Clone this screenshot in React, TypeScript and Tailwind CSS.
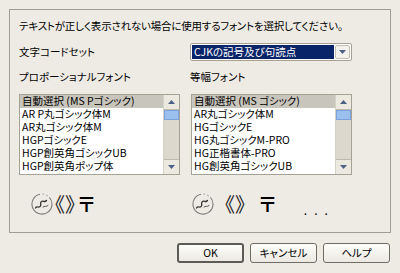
import React from "react";

const jp = "font-['Noto_Sans_CJK_JP','Noto_Sans',sans-serif] [font-feature-settings:'palt']";

const leftFonts = [
  "自動選択 (MS Pゴシック)",
  "AR P丸ゴシック体M",
  "AR丸ゴシック体M",
  "HGPゴシックE",
  "HGP創英角ゴシックUB",
  "HGP創英角ポップ体",
  "HGP行書体",
];

const rightFonts = [
  "自動選択 (MS ゴシック)",
  "AR丸ゴシック体M",
  "HGゴシックE",
  "HG丸ゴシックM-PRO",
  "HG正楷書体-PRO",
  "HG創英角ゴシックUB",
  "HG行書体",
];

const Arrow = ({ up }: { up?: boolean }) => (
  <svg width="7" height="4" viewBox="0 0 7 4">
    {up ? <path d="M0 4 L3.5 0 L7 4 Z" fill="#4d6185" /> : <path d="M0 0 L3.5 4 L7 0 Z" fill="#4d6185" />}
  </svg>
);

const ListBox = ({ items }: { items: string[] }) => (
  <div className="flex h-[81px] w-[161px] overflow-hidden border border-[#a5a195] bg-white">
    <div className="flex-1 overflow-hidden">
      {items.map((item, i) => (
        <div
          key={i}
          className={`flex h-[13px] items-center whitespace-nowrap pl-[2px] text-[10.5px] leading-none ${i === 0 ? "bg-[#c8c5bc]" : ""}`}
        >
          {item}
        </div>
      ))}
    </div>
    <div className="flex w-[16px] flex-col border-l border-[#d6d2c6] bg-[#dcd8cd]">
      <div className="flex h-[15px] items-center justify-center border-b border-[#bdb9ad] bg-[#ece9e1]">
        <Arrow up />
      </div>
      <div className="h-[10px] border border-[#7aa3dd] bg-[#9cc0ee]" />
      <div className="flex-1" />
      <div className="flex h-[15px] items-center justify-center border-t border-[#bdb9ad] bg-[#ece9e1]">
        <Arrow />
      </div>
    </div>
  </div>
);

// circled squiggle mark
const Dingbat = () => (
  <svg width="22" height="22" viewBox="0 0 22 22">
    <path d="M9 1.3 A10 10 0 1 0 18.5 4.5" fill="none" stroke="#7c7c7c" strokeWidth="1.1" />
    <path d="M19.5 6 A10 10 0 0 0 11.5 1" fill="none" stroke="#9a9a9a" strokeWidth="1" strokeDasharray="2 2" />
    <path d="M4.5 15 C6 12 8 16 9.5 13 C10.5 11 8.5 10 10.5 8.5 C12.5 7 13.5 10 15.5 7.5" fill="none" stroke="#333" strokeWidth="1.3" strokeLinecap="round" />
    <path d="M12 14 C13.5 12.5 15 14.5 17 12.5" fill="none" stroke="#555" strokeWidth="1" strokeLinecap="round" />
  </svg>
);

const Button = ({ label, main }: { label: string; main?: boolean }) => (
  <div
    className={`flex h-[20px] w-[67px] items-center justify-center rounded-[3px] bg-gradient-to-b from-[#fdfdfb] to-[#ebe9e1] text-[10.5px] ${
      main ? "border-2 border-[#5c5b55]" : "border border-[#6f6d66]"
    }`}
  >
    {label}
  </div>
);

export default function App() {
  return (
    <div className={`h-[273px] w-[400px] bg-[#eeebe5] pl-[9px] pt-[9px] text-black ${jp}`}>
      <div className="h-[224px] w-[382px] border border-[#a09d92] pl-[9px]">
        <div className="mt-[9px] flex h-[14px] items-center text-[10.5px] tracking-[-0.2px] whitespace-nowrap">
          テキストが正しく表示されない場合に使用するフォントを選択してください。
        </div>
        <div className="mt-[10px] flex h-[18px] items-center">
          <div className="w-[171px] text-[10.5px]">文字コードセット</div>
          <div className="flex h-[18px] w-[162px] items-center rounded-[2px] border border-[#a5a195] bg-white p-[1px]">
            <div className="flex h-full flex-1 items-center bg-[#0a246a] pl-[2px] text-[10.5px] text-white">
              CJKの記号及び句読点
            </div>
            <div className="ml-[1px] flex h-full w-[15px] items-center justify-center rounded-[2px] border border-[#c3bfb3] bg-[#f3f1ec]">
              <Arrow />
            </div>
          </div>
        </div>
        <div className="mt-[9px] flex h-[14px] items-center text-[10.5px]">
          <div className="w-[171px]">プロポーショナルフォント</div>
          <div>等幅フォント</div>
        </div>
        <div className="mt-[10px] flex gap-[11px]">
          <ListBox items={leftFonts} />
          <ListBox items={rightFonts} />
        </div>
        <div className="mt-[18px] flex h-[22px] items-center">
          <div className="flex w-[171px] items-center pl-[12px]">
            <Dingbat />
            <span className="-ml-[8px] text-[20px] leading-none text-[#222] [font-feature-settings:normal]">《》</span>
            <span className="-ml-[7px] text-[20px] font-bold leading-none">〒</span>
          </div>
          <div className="flex items-center pl-[2px]">
            <Dingbat />
            <span className="ml-[1px] text-[20px] leading-none text-[#222] [font-feature-settings:normal]">《》</span>
            <span className="ml-[4px] text-[20px] font-bold leading-none">〒</span>
            <span className="ml-[28px] mt-[12px] text-[12px] leading-none tracking-[7px]">...</span>
          </div>
        </div>
      </div>
      <div className="mt-[10px] flex justify-end gap-[6px] pr-[10px]">
        <Button label="OK" main />
        <Button label="キャンセル" />
        <Button label="ヘルプ" />
      </div>
    </div>
  );
}
